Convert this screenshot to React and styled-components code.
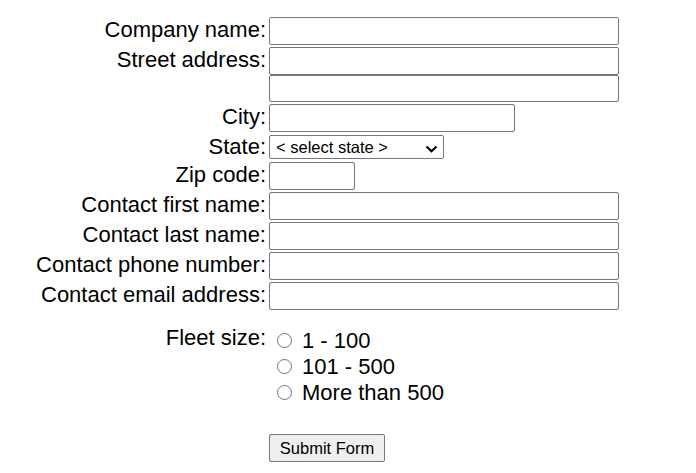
import React from "react";
import styled, { createGlobalStyle } from "styled-components";

const Global = createGlobalStyle`
  html, body { background: #ffffff; }
  body {
    margin: 8px;
    font-family: "Liberation Sans", Arial, sans-serif;
    color: #000000;
  }
`;

const Form = styled.form`
  display: grid;
  grid-template-columns: 258px auto;
  column-gap: 3px;
  row-gap: 2px;
  align-items: start;
  justify-content: start;
  padding-top: 9px;
`;

const Label = styled.label`
  justify-self: end;
  font-size: 22px;
  line-height: 25px;
  white-space: nowrap;
  margin-top: ${(p) => p.$offset || 0}px;
`;

const Field = styled.div`
  display: flex;
  flex-direction: column;
  align-items: flex-start;
  margin-top: ${(p) => p.$offset || 0}px;
`;

const TextInput = styled.input`
  box-sizing: border-box;
  width: ${(p) => p.$w}px;
  height: ${(p) => p.$h || 28}px;
  margin: 0;
  padding: 1px 4px;
  border: 1px solid #767676;
  border-radius: 2px;
  background: #ffffff;
  font-family: "Liberation Sans", Arial, sans-serif;
  font-size: 16px;
  outline: none;
`;

const SelectWrap = styled.div`
  position: relative;
  width: 175px;
  height: 24px;
  margin-top: 1px;
`;

const Select = styled.select`
  appearance: none;
  -webkit-appearance: none;
  box-sizing: border-box;
  width: 175px;
  height: 24px;
  margin: 0;
  padding: 0 20px 0 6px;
  border: 1px solid #767676;
  border-radius: 2px;
  background: #ffffff;
  color: #000000;
  font-family: "Liberation Sans", Arial, sans-serif;
  font-size: 16.5px;
  line-height: 22px;
  outline: none;
`;

const Chevron = styled.svg`
  position: absolute;
  left: 156px;
  top: 10px;
  width: 13px;
  height: 8px;
  pointer-events: none;
`;

const RadioList = styled.div`
  display: flex;
  flex-direction: column;
  padding-top: 3px;
`;

const RadioLine = styled.label`
  display: flex;
  align-items: center;
  height: 26px;
  font-size: 22px;
  line-height: 26px;
  white-space: nowrap;
`;

const Radio = styled.input`
  appearance: none;
  -webkit-appearance: none;
  box-sizing: border-box;
  width: 15px;
  height: 15px;
  margin: 0 10px 0 8px;
  border: 1px solid #767676;
  border-radius: 50%;
  background: #ffffff;
  position: relative;
  top: -1px;
  outline: none;
`;

const Spacer = styled.div``;

const Button = styled.button`
  box-sizing: border-box;
  width: 116px;
  height: 28px;
  margin: 0;
  padding: 0 6px;
  border: 1px solid #767676;
  border-radius: 2px;
  background: #efefef;
  color: #000000;
  font-family: "Liberation Sans", Arial, sans-serif;
  font-size: 16.5px;
  line-height: 20px;
`;

const rows = [
  { label: "Contact first name:", w: 350 },
  { label: "Contact last name:", w: 350 },
  { label: "Contact phone number:", w: 350 },
  { label: "Contact email address:", w: 350 },
];

export default function App() {
  return (
    <>
      <Global />
      <Form onSubmit={(e) => e.preventDefault()}>
        <Label>Company name:</Label>
        <Field>
          <TextInput type="text" $w={350} />
        </Field>

        <Label>Street address:</Label>
        <Field>
          <TextInput type="text" $w={350} />
          <TextInput type="text" $w={350} $h={27} />
        </Field>

        <Label>City:</Label>
        <Field>
          <TextInput type="text" $w={246} />
        </Field>

        <Label>State:</Label>
        <Field>
          <SelectWrap>
            <Select defaultValue="">
              <option value="">&lt; select state &gt;</option>
            </Select>
            <Chevron viewBox="0 0 13 8">
              <path d="M1.5 1.5 L6.5 6.2 L11.5 1.5" fill="none" stroke="#000" strokeWidth="2.2" />
            </Chevron>
          </SelectWrap>
        </Field>

        <Label $offset={1}>Zip code:</Label>
        <Field $offset={1}>
          <TextInput type="text" $w={86} />
        </Field>

        {rows.map((r) => (
          <React.Fragment key={r.label}>
            <Label>{r.label}</Label>
            <Field>
              <TextInput type="text" $w={r.w} />
            </Field>
          </React.Fragment>
        ))}

        <Label $offset={13}>Fleet size:</Label>
        <Field $offset={13}>
          <RadioList>
            <RadioLine>
              <Radio type="radio" name="fleet" />1 - 100
            </RadioLine>
            <RadioLine>
              <Radio type="radio" name="fleet" />101 - 500
            </RadioLine>
            <RadioLine>
              <Radio type="radio" name="fleet" />More than 500
            </RadioLine>
          </RadioList>
        </Field>

        <Spacer />
        <Field $offset={26}>
          <Button type="submit">Submit Form</Button>
        </Field>
      </Form>
    </>
  );
}
